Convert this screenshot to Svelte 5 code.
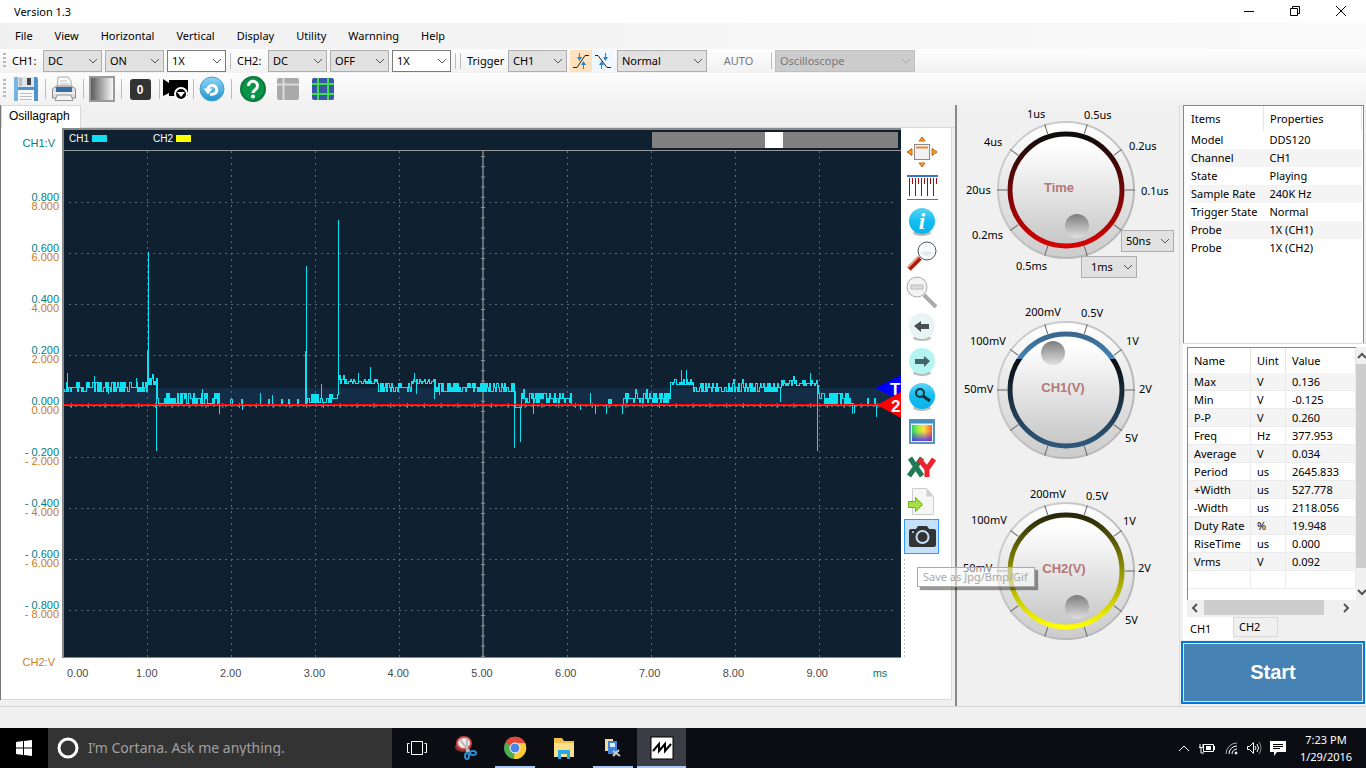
<script lang="ts">
	type Dial = {
		id: string;
		title: string;
		titleX: number;
		ring: string;
		knob: [number, number];
		labels: [string, number, number][];
	};

	const menus = ['File', 'View', 'Horizontal', 'Vertical', 'Display', 'Utility', 'Warnning', 'Help'];

	const levels = [8, 6, 4, 2, 0, -2, -4, -6, -8];
	const times = ['0.00', '1.00', '2.00', '3.00', '4.00', '5.00', '6.00', '7.00', '8.00', '9.00', 'ms'];

	const columns = [83, 167, 251, 335, 419, 503, 587, 671, 755];
	const rows = [51, 102, 153, 204, 255, 306, 357, 408, 459];

	// noise bands of the trace: [end x, top y, bottom y]
	const bands = [
		[82, 231, 240],
		[92, 227, 233],
		[154, 242, 252],
		[241, 251, 253],
		[273, 243, 251],
		[313, 228, 232],
		[346, 232, 240],
		[370, 228, 232],
		[450, 232, 240],
		[456, 255, 256],
		[506, 242, 251],
		[558, 251, 253],
		[605, 242, 251],
		[628, 228, 233],
		[716, 232, 240],
		[753, 229, 234],
		[788, 242, 252],
		[812, 250, 253]
	];

	const spikes: Record<number, number> = {
		3: 222, 30: 225, 44: 243, 72: 227, 83: 200, 84: 101, 92: 300, 138: 238, 155: 263, 178: 259,
		196: 242, 208: 244, 241: 200, 242: 115, 257: 233, 274: 69, 294: 222, 306: 216, 350: 222,
		352: 243, 370: 248, 375: 244, 450: 297, 456: 291, 469: 263, 516: 259, 526: 242, 531: 263,
		542: 263, 558: 263, 617: 219, 622: 219, 716: 251, 746: 222, 753: 300, 788: 263, 790: 262,
		812: 266
	};

	function buildTrace() {
		let seed = 7;
		let x = 0;
		let y = 238;
		let d = 'M0 238';
		for (const [end, top, bottom] of bands) {
			const middle = Math.round((top + bottom) / 2);
			for (; x <= end; x++) {
				seed = (seed * 16807) % 2147483647;
				const r = seed / 2147483647;
				if (bottom - top < 4) y = r > 0.93 ? top - 3 : bottom;
				else if (y === bottom) y = r < 0.5 ? top : r < 0.8 ? middle : bottom;
				else y = r < 0.5 ? bottom : r < 0.8 ? middle : r < 0.97 ? top : top - 4;
				d += `H${x}.5`;
				if (spikes[x]) d += `V${spikes[x]}`;
				d += `V${y}`;
			}
		}
		return d;
	}

	const trace = buildTrace();

	const dials: Dial[] = [
		{
			id: 'time',
			title: 'Time',
			titleX: 102,
			ring: 'url(#ring-time)',
			knob: [120, 120],
			labels: [
				['1us', 70, 12], ['0.5us', 127, 13], ['4us', 27, 40], ['0.2us', 172, 44],
				['20us', 9, 88], ['0.1us', 184, 89], ['0.2ms', 15, 133], ['0.5ms', 59, 164]
			]
		},
		{
			id: 'ch1',
			title: 'CH1(V)',
			titleX: 106,
			ring: 'url(#ring-ch1)',
			knob: [96, 47],
			labels: [
				['200mV', 68, 10], ['0.5V', 124, 11], ['100mV', 13, 39], ['1V', 169, 39],
				['50mV', 7, 87], ['2V', 182, 87], ['5V', 168, 136]
			]
		},
		{
			id: 'ch2',
			title: 'CH2(V)',
			titleX: 107,
			ring: 'url(#ring-ch2)',
			knob: [120, 120],
			labels: [
				['200mV', 73, 11], ['0.5V', 129, 13], ['100mV', 14, 37], ['1V', 166, 38],
				['50mV', 6, 85], ['2V', 181, 85], ['5V', 168, 137]
			]
		}
	];

	const ticks = Array.from({ length: 10 }, (_, i) => i * 36);

	const properties = [
		['Model', 'DDS120'],
		['Channel', 'CH1'],
		['State', 'Playing'],
		['Sample Rate', '240K Hz'],
		['Trigger State', 'Normal'],
		['Probe', '1X (CH1)'],
		['Probe', '1X (CH2)']
	];

	const measures = [
		['Max', 'V', '0.136'],
		['Min', 'V', '-0.125'],
		['P-P', 'V', '0.260'],
		['Freq', 'Hz', '377.953'],
		['Average', 'V', '0.034'],
		['Period', 'us', '2645.833'],
		['+Width', 'us', '527.778'],
		['-Width', 'us', '2118.056'],
		['Duty Rate', '%', '19.948'],
		['RiseTime', 'us', '0.000'],
		['Vrms', 'V', '0.092'],
		['', '', '']
	];

	let activeChannel = $state('CH1');

	function level(n: number, digits: number) {
		return (n < 0 ? '- ' : '') + (Math.abs(n) * digits).toFixed(3);
	}
</script>

{#snippet pick(name: string, value: string, kind: string)}
	<select class="pick {kind}" aria-label={name} disabled={kind.includes('off')}>
		<option>{value}</option>
	</select>
{/snippet}

<div class="app">
	<header class="titlebar">
		<span class="title">Version 1.3</span>
		<button class="win" aria-label="Minimize"><svg width="12" height="12"><path d="M1 6.500h10" stroke="#000" /></svg></button>
		<button class="win" aria-label="Restore"><svg width="12" height="12" fill="none" stroke="#000"><path d="M1.500 3.500h7v7h-7zM3.500 3.500v-2h7v7h-2" /></svg></button>
		<button class="win" aria-label="Close"><svg width="12" height="12"><path d="M1 1l10 10M11 1L1 11" stroke="#000" /></svg></button>
	</header>

	<nav class="menubar">
		{#each menus as item}
			<button class="menu">{item}</button>
		{/each}
	</nav>

	<div class="toolbar">
		<span class="grip"></span>
		<span class="tag">CH1:</span>
		{@render pick('CH1 coupling', 'DC', '')}
		{@render pick('CH1 state', 'ON', '')}
		{@render pick('CH1 probe', '1X', 'white')}
		<span class="sep"></span>
		<span class="tag">CH2:</span>
		{@render pick('CH2 coupling', 'DC', '')}
		{@render pick('CH2 state', 'OFF', '')}
		{@render pick('CH2 probe', '1X', 'white')}
		<span class="sep"></span>
		<span class="sep"></span>
		<span class="tag trigger">Trigger</span>
		{@render pick('Trigger source', 'CH1', '')}
		<span class="slopes">
			<button class="slope on" aria-label="Rising edge">
				<svg width="18" height="18" fill="none"><path d="M1 15.500h4L13 3.500h4" stroke="#222" /><path d="M7.500 1v6M11.500 17v-6" stroke="#1c86d8" /><path d="M5 5h5l-2.500 4zM9 13h5l-2.500-4z" fill="#1c86d8" /></svg>
			</button>
			<button class="slope" aria-label="Falling edge">
				<svg width="18" height="18" fill="none"><path d="M1 3.500h3L13 15.500h4" stroke="#222" /><path d="M11.500 1v6M7.500 17v-6" stroke="#1c86d8" /><path d="M9 5h5l-2.500 4zM5 13h5l-2.500-4z" fill="#1c86d8" /></svg>
			</button>
		</span>
		{@render pick('Trigger mode', 'Normal', 'mid')}
		<button class="auto">AUTO</button>
		<span class="sep"></span>
		{@render pick('Device mode', 'Oscilloscope', 'wide off')}
	</div>

	<div class="toolbar icons">
		<span class="grip"></span>
		<button class="tool" aria-label="Save">
			<svg width="26" height="26"><path d="M1 1h23l1 2v22H1z" fill="#4c94cf" /><path d="M1 1h4v24H1z" fill="#79b5e2" /><path d="M5 1h16v10H5z" fill="#dfe4e8" /><path d="M14 2h4v7h-4z" fill="#444" /><path d="M6 2h3v8H6z" fill="#b5bcc2" /><path d="M5 14h16v11H5z" fill="#f8f8f8" /><path d="M7 17.500h12M7 20.500h12M7 23.500h12" stroke="#b9bec4" /></svg>
		</button>
		<span class="sep"></span>
		<button class="tool" aria-label="Print">
			<svg width="26" height="26"><path d="M7 1h10l3 4v8H6z" fill="#fafafa" stroke="#aaa" /><path d="M9 5h7M9 8h9" stroke="#bbb" /><path d="M1.500 13l4-3h15l4 3v9h-23z" fill="#dedede" stroke="#8b8b8b" /><path d="M5 11h16v5H5z" fill="#3c6ea5" /><path d="M2 17h22" stroke="#fff" /><path d="M6 19h14l2 5.500H4z" fill="#f4f4f4" stroke="#999" /></svg>
		</button>
		<span class="sep"></span>
		<button class="tool" aria-label="Intensity">
			<svg width="26" height="26"><rect x="1" y="1" width="24" height="24" fill="url(#gray)" stroke="#999" stroke-width="2" /></svg>
		</button>
		<span class="sep"></span>
		<button class="tool" aria-label="Zero">
			<svg width="26" height="26"><rect x="3" y="3" width="21" height="21" rx="3" fill="#333" /><text x="13" y="18" class="zero">0</text></svg>
		</button>
		<span class="sep"></span>
		<button class="tool narrow" aria-label="Record">
			<svg width="26" height="26"><path d="M0 3l6 4V4h19v16H6v-3l-6 3z" fill="#000" /><circle cx="18" cy="18" r="6" fill="#000" stroke="#fff" stroke-width="2" /><path d="M14 16h8l-4 5z" fill="#fff" /></svg>
		</button>
		<span class="sep"></span>
		<button class="tool" aria-label="Refresh">
			<svg width="26" height="26"><circle cx="13" cy="13" r="12" fill="url(#sky)" stroke="#4aa0d0" /><path d="M11 18.500q8 0 6.500-6q-2-4.500-6.500-2.500q-2 1-2 3" fill="none" stroke="#fff" stroke-width="3" /><path d="M4.500 12.500h9l-4.500 6z" fill="#fff" /></svg>
		</button>
		<span class="sep"></span>
		<button class="tool next" aria-label="Help">
			<svg width="26" height="26"><circle cx="13" cy="13" r="13" fill="#0b7a3c" /><circle cx="13" cy="13" r="11" fill="#0a9447" /><path d="M8.500 10a4.500 4.500 0 1 1 7 3.500c-2 1.500-2.500 2-2.500 3.500" fill="none" stroke="#fff" stroke-width="3" /><circle cx="13" cy="20.500" r="2" fill="#fff" /></svg>
		</button>
		<button class="tool next" aria-label="Split view">
			<svg width="24" height="24"><rect x="1" y="1" width="22" height="22" rx="2" fill="#a9a9a9" /><path d="M7.500 1v22M1 7.500h22" stroke="#dcdcdc" stroke-width="2" /></svg>
		</button>
		<button class="tool next" aria-label="Grid">
			<svg width="24" height="24"><rect x="1" y="1" width="22" height="22" rx="2" fill="#3a57a8" /><path d="M7 1v22M17 1v22M1 7h22M1 17h22" stroke="#3fe04a" stroke-width="2" /></svg>
		</button>
	</div>

	<main class="main">
		<section class="scope">
			<div class="tabs"><button class="tab">Osillagraph</button></div>
			<div class="page">
				<div class="yaxis">
					<span class="c1 unit">CH1:V</span>
					{#each levels as n}
						<div class="pair">
							<span class="c1">{level(n, 0.1)}</span>
							<span class="c2">{level(n, 1)}</span>
						</div>
					{/each}
					<span class="c2 unit last">CH2:V</span>
				</div>

				<div class="screen">
					<div class="display">
						<div class="legend">
							<span>CH1</span><i class="cyan"></i>
							<span class="second">CH2</span><i class="yellow"></i>
							<div class="overview"><div class="window"></div></div>
						</div>
						<svg class="plot" viewBox="0 0 837 506" role="img" aria-label="Waveform">
							<rect y="237" width="837" height="17" fill="#142d47" />
							<g class="grid">
								{#each columns as x}<path d="M{x} 0V506" />{/each}
								{#each rows as y}<path d="M5 {y}H833" />{/each}
							</g>
							<path d="M419 0V506" stroke="#626a73" stroke-width="2" />
							<path d="M419 5V506" class="marks vertical" />
							<path d="M7 254.500H837" class="marks horizontal" />
							<path d="M0 254.500H837" class="zero-line" />
							<path d={trace} class="trace" />
							<path d="M0 253.500H837" class="red-line" />
							<path d="M811 237l26-13v26z" fill="#00f" />
							<text x="826" y="244" class="flag">T</text>
							<path d="M813 254l24-13v26z" fill="#f00" />
							<text x="827" y="261" class="flag">2</text>
						</svg>
					</div>
					<div class="xaxis">
						{#each times as t}
							<span class:ms={t === 'ms'}>{t}</span>
						{/each}
					</div>
				</div>

				<div class="side">
					<button class="side-btn" aria-label="Fit window">
						<svg width="32" height="32"><path d="M16 1l3 4h-6zM16 31l3-4h-6zM1 16l5-3.500v7zM31 16l-5-3.500v7z" fill="#f09a3a" stroke="#c8660a" /><rect x="8.500" y="8.500" width="15" height="15" fill="#f2f2f2" stroke="#8a8a8a" /><path d="M10 11.500h12" stroke="#e48a3a" stroke-width="2" /></svg>
					</button>
					<button class="side-btn" aria-label="Ruler">
						<svg width="32" height="32"><path d="M1 5h31" stroke="#3577d4" stroke-width="2" /><path d="M1 28.500h31" stroke="#3577d4" /><path d="M3.500 7v18M9.500 7v18M15.500 7v18M21.500 7v18M27.500 7v18M6.500 7v6M12.500 7v6M18.500 7v6M24.500 7v6M30.500 7v6" stroke="#a00a0a" /></svg>
					</button>
					<button class="side-btn" aria-label="Info">
						<svg width="32" height="32"><ellipse cx="16" cy="27" rx="9" ry="3" fill="#bbb" /><circle cx="16" cy="15" r="13" fill="url(#info)" /><text x="16" y="23" class="info">i</text></svg>
					</button>
					<button class="side-btn" aria-label="Zoom in">
						<svg width="32" height="32"><path d="M3 28L14 17" stroke="#b01c0c" stroke-width="5" /><path d="M2 26L12 16" stroke="#f0a090" stroke-width="2" /><circle cx="21" cy="10" r="9" fill="#f7fbfc" stroke="#44565b" /><path d="M15 12a8 5 0 0 1 12 0a8 8 0 0 1-12 0z" fill="#e2e9eb" /></svg>
					</button>
					<button class="side-btn" aria-label="Zoom out">
						<svg width="32" height="32"><path d="M18 19l12 12" stroke="#aaa" stroke-width="4" /><circle cx="11" cy="11" r="10" fill="#f3f3f3" stroke="#aaa" /><rect x="5" y="9" width="12" height="4" fill="#ddd" stroke="#bbb" /></svg>
					</button>
					<button class="side-btn" aria-label="Previous">
						<svg width="32" height="32"><ellipse cx="16" cy="27" rx="9" ry="3" fill="#bbb" /><circle cx="16" cy="15" r="13" fill="#e9f4f4" /><path d="M8 15l7-5v3h8v5h-8v3z" fill="#4a4f50" /></svg>
					</button>
					<button class="side-btn" aria-label="Next">
						<svg width="32" height="32"><ellipse cx="16" cy="27" rx="9" ry="3" fill="#bbb" /><circle cx="16" cy="15" r="13" fill="#b4f5f2" /><path d="M24 15l-6-5v3H9v5h9v3z" fill="#456668" /></svg>
					</button>
					<button class="side-btn" aria-label="Search">
						<svg width="32" height="32"><ellipse cx="16" cy="27" rx="9" ry="3" fill="#bbb" /><circle cx="16" cy="15" r="13" fill="url(#info)" /><circle cx="14" cy="12" r="4" fill="none" stroke="#12323c" stroke-width="2" /><path d="M17 15l7 5" stroke="#12323c" stroke-width="3" /></svg>
					</button>
					<button class="side-btn" aria-label="Colours">
						<svg width="32" height="32"><rect x="4" y="4" width="24" height="23" fill="#e6f3fa" stroke="#5295bd" stroke-width="2" /><path d="M5 6h22" stroke="#3f8fc0" stroke-width="3" /><rect x="6" y="9" width="20" height="16" fill="url(#rainbow)" /><rect x="6" y="9" width="20" height="16" fill="url(#shade)" /></svg>
					</button>
					<button class="side-btn" aria-label="XY mode">
						<svg width="32" height="32"><path d="M4 7l12 18M16 7L3 25" stroke="#1f7a55" stroke-width="5" /><path d="M13 8l8 10l7-10M21 16v10" fill="none" stroke="#f0232d" stroke-width="5" /></svg>
					</button>
					<button class="side-btn" aria-label="Export">
						<svg width="32" height="32"><path d="M6.500 2.500h14l7 8v18h-21z" fill="#f6f6f6" stroke="#ccc" /><path d="M20.500 2.500l7 8h-7z" fill="#cfcfcf" /><path d="M2.500 15.500h7v-4l7 7l-7 7v-4h-7z" fill="#a5df45" stroke="#6fb51a" /></svg>
					</button>
					<div class="shot">
						<button class="side-btn camera" aria-label="Save as picture">
							<svg width="32" height="32"><path d="M5 8h5l2-3h9l2 3h5q2 0 2 2v14q0 2-2 2H5q-2 0-2-2V10q0-2 2-2z" fill="#333" /><circle cx="16.500" cy="16" r="7" fill="#c5e0fb" /><circle cx="16.500" cy="16" r="5" fill="#333" /><circle cx="7" cy="11" r="1" fill="#c5e0fb" /></svg>
						</button>
						<span class="tooltip" role="tooltip">Save as Jpg/Bmp/Gif</span>
					</div>
					<span class="dots"></span>
				</div>
			</div>
		</section>

		<section class="dials">
			{#each dials as dial}
				<div class="dial {dial.id}">
					<svg viewBox="0 0 222 181" role="img" aria-label="{dial.title} dial">
						<circle cx="109" cy="84" r="68" fill="url(#bevel)" stroke="url(#rim)" stroke-width="2" />
						<g stroke="#666">
							{#each ticks as a}
								<path d="M168 84h10" transform="rotate({a} 109 84)" />
							{/each}
						</g>
						<circle cx="109" cy="84" r="56" fill="url(#face)" stroke={dial.ring} stroke-width="5" />
						<circle cx={dial.knob[0]} cy={dial.knob[1]} r="12" fill="url(#knob)" />
						<text x={dial.titleX} y="86" class="dial-title">{dial.title}</text>
						{#each dial.labels as [text, x, y]}
							<text {x} {y} class="dial-label">{text}</text>
						{/each}
					</svg>
					{#if dial.id === 'time'}
						<select class="pick over fine" aria-label="Fast time base"><option>50ns</option></select>
						<select class="pick over coarse" aria-label="Slow time base"><option>1ms</option></select>
					{/if}
				</div>
			{/each}
		</section>

		<aside class="info-col">
			<div class="box props">
				<table>
					<thead><tr><th>Items</th><th>Properties</th></tr></thead>
					<tbody>
						{#each properties as [name, value]}
							<tr><td>{name}</td><td>{value}</td></tr>
						{/each}
					</tbody>
				</table>
			</div>
			<div class="measure">
				<div class="box values">
					<table>
						<thead><tr><th>Name</th><th>Uint</th><th>Value</th></tr></thead>
						<tbody>
							{#each measures as [name, unit, value]}
								<tr><td>{name}</td><td>{unit}</td><td>{value}</td></tr>
							{/each}
						</tbody>
					</table>
				</div>
				<div class="vbar">
					<svg width="10" height="17" fill="none"><path d="M2 11l4-4l4 4" stroke="#555" stroke-width="2" /></svg>
					<div class="vthumb"></div>
					<svg width="10" height="17" fill="none"><path d="M2 7l4 4l4-4" stroke="#555" stroke-width="2" /></svg>
				</div>
				<div class="hbar">
					<svg width="17" height="17" fill="none"><path d="M10 4L6 8l4 4" stroke="#555" stroke-width="2" /></svg>
					<div class="hthumb"></div>
					<svg width="17" height="17" fill="none"><path d="M6 4l4 4l-4 4" stroke="#555" stroke-width="2" /></svg>
				</div>
			</div>
			<div class="channels">
				{#each ['CH1', 'CH2'] as ch}
					<button class="channel" class:active={activeChannel === ch} onclick={() => (activeChannel = ch)}>{ch}</button>
				{/each}
			</div>
			<button class="start">Start</button>
		</aside>
	</main>

	<footer class="status"></footer>

	<div class="taskbar">
		<button class="task home" aria-label="Start menu">
			<svg width="16" height="16"><path d="M0 2l7-1v6.500H0zM8 1l8-1v7.500H8zM0 8.500h7V15l-7-1zM8 8.500h8V16l-8-1z" fill="#fff" /></svg>
		</button>
		<label class="cortana">
			<svg width="24" height="24"><circle cx="12" cy="12" r="9" fill="none" stroke="#fff" stroke-width="3" /></svg>
			<input type="text" placeholder="I’m Cortana. Ask me anything." aria-label="Search" />
		</label>
		<button class="task" aria-label="Task view">
			<svg width="22" height="18" fill="none" stroke="#fff"><path d="M5.500 2.500h11v13h-11zM3.500 4.500h-2v9h2M18.500 4.500h2v9h-2" /></svg>
		</button>
		<button class="task" aria-label="Snipping tool">
			<svg width="24" height="26"><ellipse cx="9" cy="12" rx="8" ry="5" fill="#8a3030" /><ellipse cx="10" cy="8" rx="7" ry="6" fill="#f3e9e9" stroke="#d04a4a" stroke-width="2" /><path d="M6 5l10 12M13 3v14" stroke="#bbb" stroke-width="2" /><ellipse cx="13" cy="21" rx="2" ry="3" fill="none" stroke="#2b8fd8" stroke-width="2" /><ellipse cx="19" cy="18" rx="3" ry="2" fill="none" stroke="#2b8fd8" stroke-width="2" /></svg>
		</button>
		<button class="task run" aria-label="Chrome">
			<svg width="24" height="24"><circle cx="12" cy="12" r="11" fill="#4caf50" /><path d="M12 12L2.500 6.500A11 11 0 0 1 22.500 8z" fill="#e24a3b" /><path d="M12 12l10.500-4A11 11 0 0 1 11 23z" fill="#fbcb33" /><path d="M12 7h10.300l.7 3-7 3z" fill="#fbcb33" /><path d="M2.500 6.500A11 11 0 0 1 22 7H12z" fill="#e24a3b" /><circle cx="12" cy="12" r="5" fill="#4a86e8" stroke="#fff" stroke-width="1" /></svg>
		</button>
		<button class="task" aria-label="File Explorer">
			<svg width="24" height="24"><path d="M2 2h8l2 3h10v16H2z" fill="#f0c24b" /><path d="M2 7h20v14H2z" fill="#fbe08a" /><path d="M6 14h12v9h-3v-5H9v5H6z" fill="#2aa9e8" /></svg>
		</button>
		<button class="task run" aria-label="Driver tool">
			<svg width="24" height="24"><path d="M4 3h8v12H4z" fill="#f2dc9a" /><path d="M7 5h9v13H7z" fill="#3f83d8" /><path d="M9 7h5v4H9z" fill="#dbeafc" /><path d="M12 15l7 5M18 14l-6 6" stroke="#c8cdd2" stroke-width="2" /></svg>
		</button>
		<button class="task run current" aria-label="Oscilloscope">
			<svg width="24" height="24"><rect x="1" y="1" width="22" height="22" fill="#fff" stroke="#000" /><path d="M3 15L9 8v7l6-7v7l6-7" fill="none" stroke="#000" stroke-width="2" /></svg>
		</button>
		<div class="tray">
			<svg width="12" height="20" fill="none"><path d="M1 13l5-5l5 5" stroke="#fff" /></svg>
			<svg width="18" height="20" fill="none" stroke="#fff"><path d="M5.500 6.500h10v7h-10zM16.500 8v4" /><path d="M1 9.500h5M3 9v6h3M2 6v3M5 6v3" /><path d="M8 8h5v4H8z" fill="#fff" stroke="none" /></svg>
			<svg width="14" height="20" fill="none" stroke="#aaa"><path d="M2 16A11 11 0 0 1 13 5" /><path d="M5 16a8 8 0 0 1 8-8M8 16a5 5 0 0 1 5-5" stroke="#fff" /><circle cx="12" cy="15" r="1" fill="#fff" stroke="#fff" /></svg>
			<svg width="16" height="20" fill="none" stroke="#fff"><path d="M1.500 8.500h2l4-4v11l-4-4h-2z" /><path d="M9 8q2 2 0 4M11 6q3 4 0 8" /><path d="M13 4q4 6 0 12" stroke="#888" /></svg>
			<svg width="16" height="20"><path d="M0 3h16v11H7l-3 4v-4H0z" fill="#fff" /><path d="M3 6.500h10M3 8.500h10M3 10.500h7" stroke="#000" /></svg>
			<div class="clock"><span>7:23 PM</span><span>1/29/2016</span></div>
		</div>
	</div>
</div>

<svg class="defs" width="0" height="0" aria-hidden="true">
	<defs>
		<linearGradient id="gray"><stop offset="0" stop-color="#555" /><stop offset="1" stop-color="#fff" /></linearGradient>
		<linearGradient id="sky" x2="0" y2="1"><stop offset="0" stop-color="#8fd6f5" /><stop offset="1" stop-color="#1f93d0" /></linearGradient>
		<linearGradient id="info" x2="0" y2="1"><stop offset="0" stop-color="#5fd4f7" /><stop offset="0.5" stop-color="#12bdf0" /><stop offset="1" stop-color="#0cb4e8" /></linearGradient>
		<linearGradient id="rainbow"><stop offset="0" stop-color="#2fc96a" /><stop offset="0.3" stop-color="#9cf03c" /><stop offset="0.6" stop-color="#ffe13c" /><stop offset="1" stop-color="#ff5a3c" /></linearGradient>
		<linearGradient id="shade" x2="0" y2="1"><stop offset="0.4" stop-color="#3a3cff" stop-opacity="0" /><stop offset="1" stop-color="#5a2ce8" stop-opacity="0.9" /></linearGradient>
		<linearGradient id="bevel" x2="0" y2="1"><stop offset="0" stop-color="#fff" /><stop offset="1" stop-color="#ccc" /></linearGradient>
		<linearGradient id="face" x2="0" y2="1"><stop offset="0.1" stop-color="#fff" /><stop offset="1" stop-color="#c6c6c6" /></linearGradient>
		<linearGradient id="rim" x2="1" y2="1"><stop offset="0.2" stop-color="#ccc" /><stop offset="0.7" stop-color="#b8b8b8" /></linearGradient>
		<linearGradient id="knob" x2="0" y2="1"><stop offset="0" stop-color="#7d7d7d" /><stop offset="1" stop-color="#e0e0e0" /></linearGradient>
		<linearGradient id="ring-time" x2="0" y2="1"><stop offset="0" stop-color="#0d0d0d" /><stop offset="1" stop-color="#d80000" /></linearGradient>
		<linearGradient id="ring-ch1" x2="0" y2="1"><stop offset="0" stop-color="#39678f" /><stop offset="0.220" stop-color="#4682b4" /><stop offset="0.220" stop-color="#0a0d10" /><stop offset="1" stop-color="#30587a" /></linearGradient>
		<linearGradient id="ring-ch2" x2="0" y2="1"><stop offset="0" stop-color="#26260a" /><stop offset="1" stop-color="#ffff00" /></linearGradient>
	</defs>
</svg>

<style>
	:global(body) {
		margin: 0;
		background: #f0f0f0;
	}

	.app {
		display: flex;
		flex-direction: column;
		min-height: 100vh;
		font-family: 'Noto Sans', 'Open Sans', sans-serif;
		font-size: 11px;
		line-height: 16px;
		color: #000;
	}

	button,
	select,
	input {
		font: inherit;
		color: inherit;
		margin: 0;
		padding: 0;
		border: 0;
		background: none;
		box-sizing: border-box;
	}

	button {
		display: flex;
		align-items: center;
		justify-content: center;
	}

	svg {
		display: block;
		flex: none;
	}

	.defs {
		position: absolute;
	}

	.titlebar {
		display: flex;
		height: 23px;
		padding-right: 2px;
		background: #fff;
	}

	.title {
		flex: 1;
		padding: 4px 0 0 14px;
	}

	.win {
		width: 46px;
		height: 21px;
	}

	.menubar {
		display: flex;
		height: 26px;
		padding-left: 4px;
		background: linear-gradient(90deg, #f0f0f0, #fafafa);
	}

	.menu {
		padding: 0 11px;
	}

	.toolbar {
		display: flex;
		align-items: center;
		gap: 3px;
		height: 24px;
		padding-left: 3px;
		background: linear-gradient(#fdfdfd, #f1f1f1);
	}

	.toolbar.icons {
		gap: 0;
		height: 32px;
	}

	.grip {
		width: 3px;
		height: 16px;
		background: repeating-linear-gradient(#b8b8b8 0 2px, transparent 2px 4px);
	}

	.icons .grip {
		margin-right: 4px;
		height: 20px;
	}

	.tag {
		width: 28px;
		padding-left: 3px;
	}

	.tag.trigger {
		width: 38px;
	}

	.sep {
		width: 1px;
		height: 16px;
		margin-left: 1px;
		background: #bdbdbd;
	}

	.icons .sep {
		height: 20px;
		margin: 0 2px 0 3px;
	}

	.pick {
		appearance: none;
		width: 59px;
		height: 22px;
		padding: 0 16px 0 4px;
		border: 1px solid #adadad;
		border-radius: 0;
		background: #e1e1e1 url("data:image/svg+xml,%3Csvg xmlns='http://www.w3.org/2000/svg' width='10' height='6' fill='none'%3E%3Cpath d='M1 1l4 4l4-4' stroke='%23555'/%3E%3C/svg%3E") no-repeat right 3px center;
	}

	.pick.white {
		border-color: #7a7a7a;
		background-color: #fff;
	}

	.pick.mid {
		width: 90px;
	}

	.pick.wide {
		width: 140px;
	}

	.pick.off {
		color: #787878;
		border-color: #bfbfbf;
		background-color: #ccc;
		background-image: url("data:image/svg+xml,%3Csvg xmlns='http://www.w3.org/2000/svg' width='10' height='6' fill='none'%3E%3Cpath d='M1 1l4 4l4-4' stroke='%23a5a5a5'/%3E%3C/svg%3E");
		opacity: 1;
	}

	.slopes {
		display: flex;
	}

	.slope {
		width: 22px;
		height: 22px;
		background: #eff7ff;
	}

	.slope.on {
		background: #ffe1bd;
	}

	.auto {
		width: 57px;
		color: #777;
	}

	.tool {
		width: 32px;
		height: 32px;
	}

	.tool.narrow {
		width: 28px;
	}

	.tool.next {
		margin-left: 3px;
	}

	.zero {
		font: bold 12px 'Liberation Sans', sans-serif;
		fill: #fff;
		text-anchor: middle;
	}

	.main {
		display: flex;
		flex: 1;
		min-height: 601px;
	}

	.scope {
		display: flex;
		flex: 1;
		flex-direction: column;
		min-width: 0;
		margin-bottom: 6px;
		border-left: 1px solid #777;
		background: #f0f0f0;
	}

	.tabs {
		display: flex;
		height: 22px;
		border-bottom: 1px solid #d9d9d9;
	}

	.tab {
		height: 23px;
		padding: 0 10px 2px 7px;
		border: 1px solid #d9d9d9;
		border-bottom: 0;
		background: #fff;
		font: 12px 'Liberation Sans', sans-serif;
	}

	.page {
		display: flex;
		flex: 1;
		background: #fff;
		border-right: 1px solid #d9d9d9;
		border-bottom: 1px solid #d9d9d9;
		margin-right: 3px;
	}

	.yaxis {
		display: flex;
		flex-direction: column;
		width: 61px;
		padding-top: 9px;
		font: 11px/9px 'Liberation Sans', sans-serif;
		text-align: right;
	}

	.c1 {
		color: #008080;
	}

	.c2 {
		color: #c97b23;
	}

	.unit {
		height: 39px;
		padding: 0 7px 0 0;
		line-height: 12px;
	}

	.unit.last {
		height: 12px;
		margin-top: 21px;
	}

	.pair {
		display: flex;
		flex-direction: column;
		justify-content: center;
		height: 51px;
		padding-right: 3px;
	}

	.screen {
		flex: 1;
		min-width: 0;
	}

	.display {
		border: 1px solid #888;
		border-width: 2px 0 1px 2px;
		background: #0f2130;
	}

	.legend {
		display: flex;
		align-items: center;
		gap: 4px;
		height: 20px;
		padding: 0 3px 0 5px;
		border-bottom: 1px solid #999;
		color: #fff;
		font: 10px 'Liberation Sans', sans-serif;
	}

	.legend span {
		width: 19px;
		padding-bottom: 4px;
	}

	.legend .second {
		margin-left: 42px;
	}

	.legend i {
		width: 15px;
		height: 7px;
		margin-bottom: 4px;
	}

	.cyan {
		background: #0de0f0;
	}

	.yellow {
		background: #ff0;
	}

	.overview {
		width: 246px;
		height: 16px;
		margin-left: auto;
		background: #808080;
	}

	.window {
		width: 18px;
		height: 16px;
		margin-left: 113px;
		background: #fff;
	}

	.plot {
		width: 100%;
		height: auto;
	}

	.grid {
		stroke: #5d6874;
		stroke-width: 1;
		stroke-dasharray: 2 4;
		shape-rendering: crispEdges;
	}

	.marks {
		stroke: #8b9095;
	}

	.vertical {
		stroke-width: 4;
		stroke-dasharray: 1 9.200;
	}

	.horizontal {
		stroke-width: 5;
		stroke-dasharray: 1 15.800;
	}

	.zero-line {
		stroke: #6a6f76;
		shape-rendering: crispEdges;
	}

	.red-line {
		stroke: #f00;
		shape-rendering: crispEdges;
	}

	.trace {
		fill: none;
		stroke: #0de0f0;
		shape-rendering: crispEdges;
	}

	.flag {
		font: bold 17px 'Liberation Sans', sans-serif;
		fill: #fff;
	}

	.xaxis {
		display: flex;
		padding: 8px 0 0 1px;
		font: 11px/14px 'Liberation Sans', sans-serif;
		color: #4a4a4a;
		text-align: center;
	}

	.xaxis span {
		flex: 2;
	}

	.xaxis span:first-child {
		flex: 1;
		text-align: left;
		text-indent: 4px;
	}

	.xaxis .ms {
		flex: 1;
		color: #008080;
	}

	.side {
		display: flex;
		flex-direction: column;
		width: 47px;
		padding: 6px 0 0 3px;
	}

	.side-btn {
		width: 35px;
		height: 35px;
	}

	.info {
		font: italic bold 23px 'Liberation Serif', serif;
		fill: #fff;
		text-anchor: middle;
	}

	.shot {
		position: relative;
		width: 35px;
	}

	.camera {
		border: 1px solid #3399ff;
		background: #c5e0fb;
	}

	.tooltip {
		position: absolute;
		z-index: 2;
		top: 48px;
		left: 13px;
		padding: 1px 6px 1px 5px;
		border: 1px solid #aaa;
		background: rgba(255, 255, 255, 0.5);
		box-shadow: 3px 3px 1px rgba(0, 0, 0, 0.4);
		color: #aaa;
		white-space: nowrap;
	}

	.dots {
		width: 1px;
		height: 100px;
		margin-top: 5px;
		background: repeating-linear-gradient(#c4c4c4 0 2px, transparent 2px 4px);
	}

	.dials {
		width: 222px;
		border-left: 2px solid #8a8a8a;
		border-right: 1px solid #dcdcdc;
	}

	.dial {
		position: relative;
		height: 181px;
		padding-top: 1px;
		margin-bottom: -1px;
	}

	.dial.time {
		height: 200px;
	}

	.dial svg {
		width: 222px;
	}

	.dial-title {
		font: bold 13px 'Liberation Sans', sans-serif;
		fill: #b57878;
		text-anchor: middle;
	}

	.over {
		position: absolute;
	}

	.over.fine {
		top: 125px;
		left: 164px;
		width: 53px;
	}

	.over.coarse {
		top: 151px;
		left: 124px;
		width: 56px;
		padding-left: 9px;
	}

	.info-col {
		display: flex;
		flex-direction: column;
		width: 186px;
		padding-left: 1px;
		box-sizing: border-box;
	}

	.box {
		overflow: hidden;
		border: 1px solid #828790;
		border-bottom: 0;
		background: #fff;
	}

	.props {
		height: 237px;
		margin: 0 2px;
		padding: 0 1px 0 5px;
	}

	table {
		width: 100%;
		border-collapse: collapse;
		table-layout: fixed;
	}

	th,
	td {
		height: 18px;
		padding: 0 0 0 6px;
		font-weight: normal;
		text-align: left;
		white-space: nowrap;
	}

	th {
		height: 25px;
		border-right: 1px solid #e5e5e5;
	}

	.props td,
	.props th {
		padding-left: 2px;
	}

	.props th:first-child {
		width: 72px;
	}

	.props td + td,
	.props th + th {
		padding-left: 6px;
	}

	.props tr:nth-child(even) {
		background: #f4f4f4;
	}

	.measure {
		display: grid;
		grid-template-columns: 1fr 10px;
		padding: 3px 0 0 4px;
		margin-left: 2px;
		border-top: 1px solid #d9d9d9;
		background: #fff;
	}

	.values {
		height: 252px;
		border-right: 0;
	}

	.values th:first-child {
		width: 56px;
	}

	.values th:nth-child(2) {
		width: 28px;
	}

	.values td {
		height: 17px;
		border-right: 1px solid #ececec;
		border-bottom: 1px solid #ececec;
	}

	.values tbody tr:nth-child(odd) {
		background: #f4f4f4;
	}

	.values tbody tr:last-child {
		background: #fff;
	}

	.vbar {
		display: flex;
		flex-direction: column;
		background: #f0f0f0;
	}

	.vthumb {
		height: 204px;
		margin-bottom: auto;
		background: #cdcdcd;
	}

	.hbar {
		display: flex;
		grid-column: 1 / 3;
		height: 17px;
		background: #f0f0f0;
	}

	.hthumb {
		width: 120px;
		height: 15px;
		margin-right: 14px;
		background: #cdcdcd;
	}

	.channels {
		display: flex;
		align-items: flex-start;
		height: 24px;
		margin-left: 2px;
	}

	.channel {
		width: 45px;
		height: 20px;
		padding-left: 5px;
		justify-content: flex-start;
		border: 1px solid #d9d9d9;
	}

	.channel.active {
		width: 50px;
		height: 23px;
		padding-left: 7px;
		border: 0;
		background: #fff;
	}

	.start {
		height: 63px;
		margin-right: 1px;
		border: 2px solid #0078d7;
		outline: 1px solid #d8e6f0;
		outline-offset: -3px;
		background: #4682b4;
		color: #fff;
		font: bold 20px 'Liberation Sans', sans-serif;
	}

	.status {
		height: 21px;
		border-top: 1px solid #d4d4d4;
		background: #f0f0f0;
	}

	.taskbar {
		display: flex;
		height: 40px;
		background: #0b0d12;
	}

	.task {
		width: 49px;
		height: 40px;
	}

	.task.home {
		width: 48px;
		background: #000;
	}

	.task.run {
		background: linear-gradient(#a9c8f5, #a9c8f5) no-repeat center bottom / 40px 2px;
	}

	.task.current {
		background: linear-gradient(#a9c8f5, #a9c8f5) no-repeat center bottom / 49px 2px, #3a3d44;
	}

	.cortana {
		display: flex;
		align-items: center;
		gap: 8px;
		width: 344px;
		padding-left: 8px;
		box-sizing: border-box;
		background: #333;
	}

	.cortana input {
		flex: 1;
		font-size: 14px;
		color: #a0a0a0;
	}

	.cortana input::placeholder {
		color: #a0a0a0;
	}

	.tray {
		display: flex;
		align-items: center;
		gap: 8px;
		margin-left: auto;
		padding-right: 12px;
		color: #fff;
	}

	.clock {
		display: flex;
		flex-direction: column;
		align-items: center;
		width: 56px;
		margin-left: 4px;
		line-height: 17px;
	}
</style>
